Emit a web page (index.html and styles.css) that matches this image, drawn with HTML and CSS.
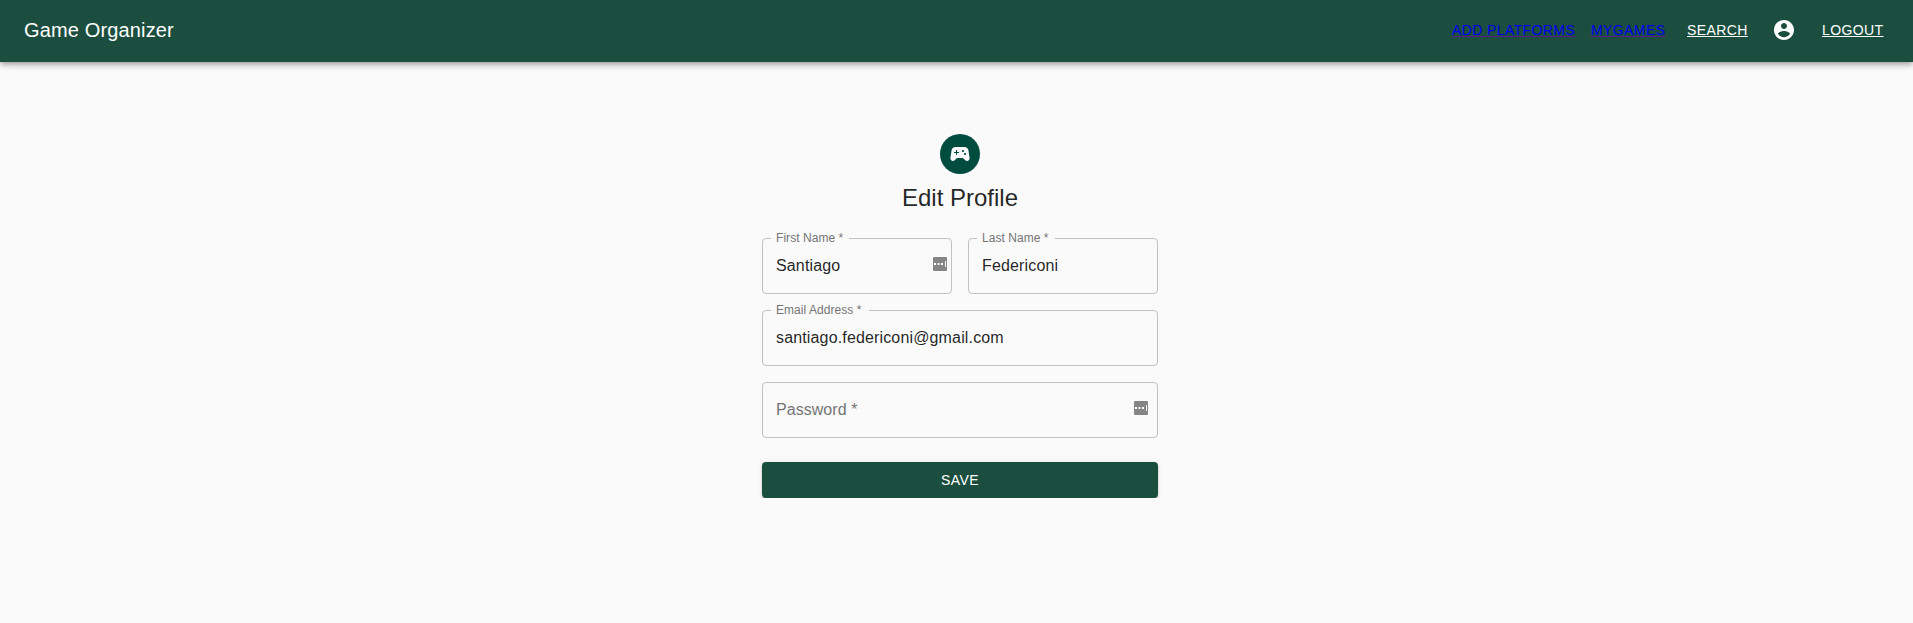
FILE: index.html
```html
<!DOCTYPE html>
<html lang="en">
<head>
<meta charset="utf-8">
<title>Game Organizer</title>
<link rel="stylesheet" href="styles.css">
</head>
<body>
<header class="appbar">
  <div class="brand">Game Organizer</div>
  <nav class="nav">
    <a class="link link-blue platforms" href="#">ADD PLATFORMS</a>
    <a class="link link-blue games" href="#">MYGAMES</a>
    <a class="link search" href="#">SEARCH</a>
    <svg class="account" viewBox="0 0 24 24"><path d="M12 2C6.48 2 2 6.48 2 12s4.480 10 10 10 10-4.480 10-10S17.520 2 12 2zm0 3c1.660 0 3 1.340 3 3s-1.340 3-3 3-3-1.340-3-3 1.340-3 3-3zm0 14.200c-2.500 0-4.710-1.280-6-3.220.03-1.990 4-3.080 6-3.080 1.990 0 5.970 1.090 6 3.080-1.290 1.940-3.500 3.220-6 3.220z"/></svg>
    <a class="link logout" href="#">LOGOUT</a>
  </nav>
</header>
<main class="page">
  <form class="form">
    <div class="avatar">
      <svg viewBox="0 0 24 24"><path d="M21.580 16.090l-1.090-7.660C20.210 6.460 18.520 5 16.530 5H7.470C5.480 5 3.790 6.460 3.510 8.430l-1.090 7.660C2.200 17.630 3.390 19 4.940 19c.68 0 1.320-.27 1.800-.75L9 16h6l2.250 2.250c.48.48 1.130.75 1.800.75 1.560 0 2.750-1.370 2.530-2.910zM11 11H9v2H8v-2H6v-1h2V8h1v2h2v1zm4-1c-.55 0-1-.45-1-1s.45-1 1-1 1 .45 1 1-.45 1-1 1zm2 3c-.55 0-1-.45-1-1s.45-1 1-1 1 .45 1 1-.45 1-1 1z"/></svg>
    </div>
    <h1 class="title">Edit Profile</h1>
    <div class="fields">
      <fieldset class="field half">
        <legend class="label label-first">First Name *</legend>
        <span class="value">Santiago</span>
        <svg class="key key-edge" viewBox="0 0 14 14"><rect class="key-bg" width="14" height="14" rx="1"/><path d="M1 6h2v2H1zM4.500 6h2v2h-2zM8 6h2v2H8zM12 4h1v6h-1z"/></svg>
      </fieldset>
      <fieldset class="field half">
        <legend class="label label-last">Last Name *</legend>
        <span class="value">Federiconi</span>
      </fieldset>
      <fieldset class="field">
        <legend class="label label-email">Email Address *</legend>
        <span class="value email">santiago.federiconi@gmail.com</span>
      </fieldset>
      <div class="field">
        <span class="value placeholder">Password *</span>
        <svg class="key" viewBox="0 0 14 14"><rect class="key-bg" width="14" height="14" rx="1"/><path d="M1 6h2v2H1zM4.500 6h2v2h-2zM8 6h2v2H8zM12 4h1v6h-1z"/></svg>
      </div>
    </div>
    <button class="save" type="button">SAVE</button>
  </form>
</main>
</body>
</html>
```
FILE: styles.css
```css
* { box-sizing: border-box; }
body {
  margin: 0;
  background: #fafafa;
  color: rgba(0, 0, 0, .87);
  font-family: "Liberation Sans", Arial, sans-serif;
  overflow: hidden;
}
.appbar {
  display: flex;
  align-items: center;
  height: 62px;
  padding: 0 29px 0 24px;
  background: #1c4e3f;
  color: #fff;
  box-shadow: 0 2px 4px -1px rgba(0,0,0,.2), 0 4px 5px 0 rgba(0,0,0,.14), 0 1px 10px 0 rgba(0,0,0,.12);
}
.brand {
  flex: 1;
  font-size: 20px;
  line-height: 32px;
  letter-spacing: .15px;
  margin-bottom: 2px;
}
.nav { display: flex; align-items: center; }
.link {
  margin-bottom: 2px;
  color: #fff;
  font-size: 14px;
  line-height: 24px;
  letter-spacing: .4px;
  white-space: nowrap;
  text-decoration: underline;
  text-decoration-thickness: 1px;
}
.link-blue { color: #00e; text-decoration-color: #551a8b; }
.platforms { width: 124px; margin-right: 15px; }
.games { width: 74px; margin-right: 22px; }
.search { width: 61px; margin-right: 24px; }
.account { width: 24px; height: 24px; margin: 0 26px 2px 0; fill: #fff; }
.logout { width: 62px; }
.page { padding: 72px 0 0 7px; }
.form {
  display: flex;
  flex-direction: column;
  align-items: center;
  width: 396px;
  margin: 0 auto;
}
.avatar {
  display: flex;
  align-items: center;
  justify-content: center;
  width: 40px;
  height: 40px;
  border-radius: 50%;
  background: #004d40;
}
.avatar svg { width: 24px; height: 24px; fill: #fafafa; }
.title {
  margin: 8px 0 0;
  font-size: 24px;
  font-weight: 400;
  line-height: 32px;
}
.fields {
  display: grid;
  grid-template-columns: 1fr 1fr;
  gap: 16px;
  width: 100%;
  margin-top: 24px;
}
.field {
  position: relative;
  grid-column: span 2;
  height: 56px;
  min-width: 0;
  margin: 0;
  padding: 17px 8px 0 13px;
  border: 1px solid #c1c1c1;
  border-radius: 4px;
}
.half { grid-column: span 1; }
fieldset.field {
  height: 62px;
  margin-top: -6px;
  padding: 12px 4px 0 8px;
}
.label {
  height: 12px;
  padding: 0 0 0 5px;
  color: #757575;
  font-size: 12px;
  line-height: 12px;
  letter-spacing: .05px;
  white-space: nowrap;
}
.label-first, .label-last { width: 78px; }
.label-email { width: 98px; }
.value {
  display: block;
  font-size: 16px;
  line-height: 19px;
  letter-spacing: .15px;
}
fieldset .value { padding-left: 5px; }
.placeholder { color: #757575; letter-spacing: .05px; }
.key {
  position: absolute;
  top: 18px;
  right: 9px;
  width: 14px;
  height: 14px;
  fill: #fff;
}
.key-edge { top: 13px; right: 4px; }
.key-bg { fill: #858585; }
.save {
  width: 100%;
  height: 36px;
  margin-top: 24px;
  border: 0;
  border-radius: 4px;
  background: #1c4e3f;
  color: #fff;
  font: 14px/24px "Liberation Sans", Arial, sans-serif;
  letter-spacing: .4px;
  box-shadow: 0 3px 1px -2px rgba(0,0,0,.2), 0 2px 2px 0 rgba(0,0,0,.14), 0 1px 5px 0 rgba(0,0,0,.12);
}
```
